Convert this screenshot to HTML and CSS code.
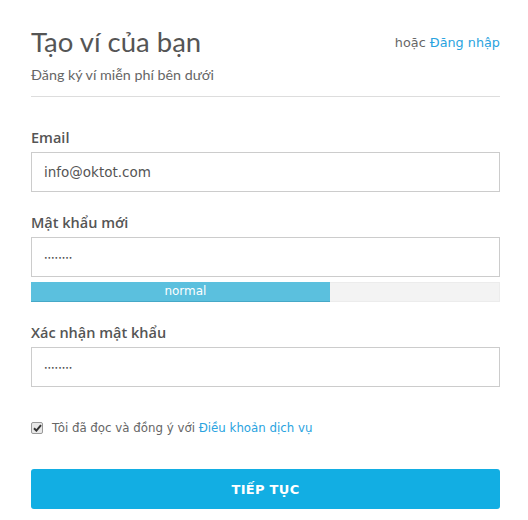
FILE: index.html
```html
<!DOCTYPE html>
<html lang="vi">
<head>
<meta charset="utf-8">
<link rel="stylesheet" href="styles.css">
</head>
<body>
<div class="wrap">
  <div class="head">
    <div class="head-left">
      <h1 class="title">Tạo ví của bạn</h1>
      <p class="sub">Đăng ký ví miễn phí bên dưới</p>
    </div>
    <div class="login">hoặc <a href="#">Đăng nhập</a></div>
  </div>
  <form class="form">
    <div class="field">
      <label class="label">Email</label>
      <div class="input">info@oktot.com</div>
    </div>
    <div class="field">
      <label class="label">Mật khẩu mới</label>
      <div class="input pw">••••••••</div>
      <div class="meter"><div class="meter-fill" style="width:64%">normal</div></div>
    </div>
    <div class="field">
      <label class="label">Xác nhận mật khẩu</label>
      <div class="input pw">••••••••</div>
    </div>
    <div class="agree">
      <span class="check"><svg width="9" height="8" viewBox="0 0 9 8"><path d="M1 4.2 L3.4 6.6 L8 1.2" fill="none" stroke="#333" stroke-width="2"/></svg></span>
      <span>Tôi đã đọc và đồng ý với <a href="#">Điều khoản dịch vụ</a></span>
    </div>
    <button type="button" class="btn">TIẾP TỤC</button>
  </form>
</div>
</body>
</html>
```
FILE: styles.css
```css
* { box-sizing: border-box; }
body {
  margin: 0;
  background: #fff;
  font-family: "DejaVu Sans", "Noto Sans", sans-serif;
  color: #555;
}
.wrap {
  width: 469px;
  margin-left: 31px;
  padding-top: 26px;
}
.head {
  display: flex;
  justify-content: space-between;
  align-items: flex-start;
  border-bottom: 1px solid #ddd;
  padding-bottom: 12px;
}
.title {
  margin: 0;
  font-family: "Lato", sans-serif;
  font-weight: 400;
  font-size: 27.5px;
  line-height: 32px;
  color: #555;
}
.sub {
  margin: 8px 0 0;
  font-family: "Lato", sans-serif;
  font-size: 14.3px;
  line-height: 18px;
  color: #666;
}
.login {
  margin-top: 8px;
  font-size: 12.8px;
  line-height: 18px;
  color: #666;
}
a { color: #29a3e0; text-decoration: none; }
.form { padding-top: 31px; }
.field { margin-bottom: 21px; }
.label {
  display: block;
  font-family: "Open Sans", sans-serif;
  font-size: 14.5px;
  font-weight: 600;
  line-height: 20px;
  color: #555;
  margin-bottom: 4px;
}
.input {
  height: 40px;
  border: 1px solid #ccc;
  padding: 0 12px;
  display: flex;
  align-items: center;
  font-size: 13.5px;
  color: #555;
}
.input.pw {
  font-size: 6px;
  color: #444;
}
.meter {
  margin-top: 5px;
  height: 20px;
  background: #f3f3f3;
  border: 1px solid #ececec;
}
.meter-fill {
  height: 20px;
  background: #5bc0de;
  border-bottom: 1px solid #46a8c7;
  color: #fff;
  font-size: 12px;
  line-height: 19px;
  text-align: center;
  padding-left: 10px;
  margin: -1px 0 0 -1px;
}
.agree {
  display: flex;
  align-items: center;
  gap: 9px;
  margin-top: 34px;
  font-size: 11.8px;
  color: #666;
}
.check {
  width: 12px;
  height: 12px;
  border: 1px solid #999;
  border-radius: 2px;
  background: #e8e8e8;
  display: flex;
  align-items: center;
  justify-content: center;
}
.btn {
  margin-top: 34px;
  width: 100%;
  height: 40px;
  border: 0;
  border-radius: 3px;
  background: #12aee3;
  color: #fff;
  font-family: "DejaVu Sans", sans-serif;
  font-weight: 700;
  font-size: 13px;
  letter-spacing: 0.3px;
}
```
